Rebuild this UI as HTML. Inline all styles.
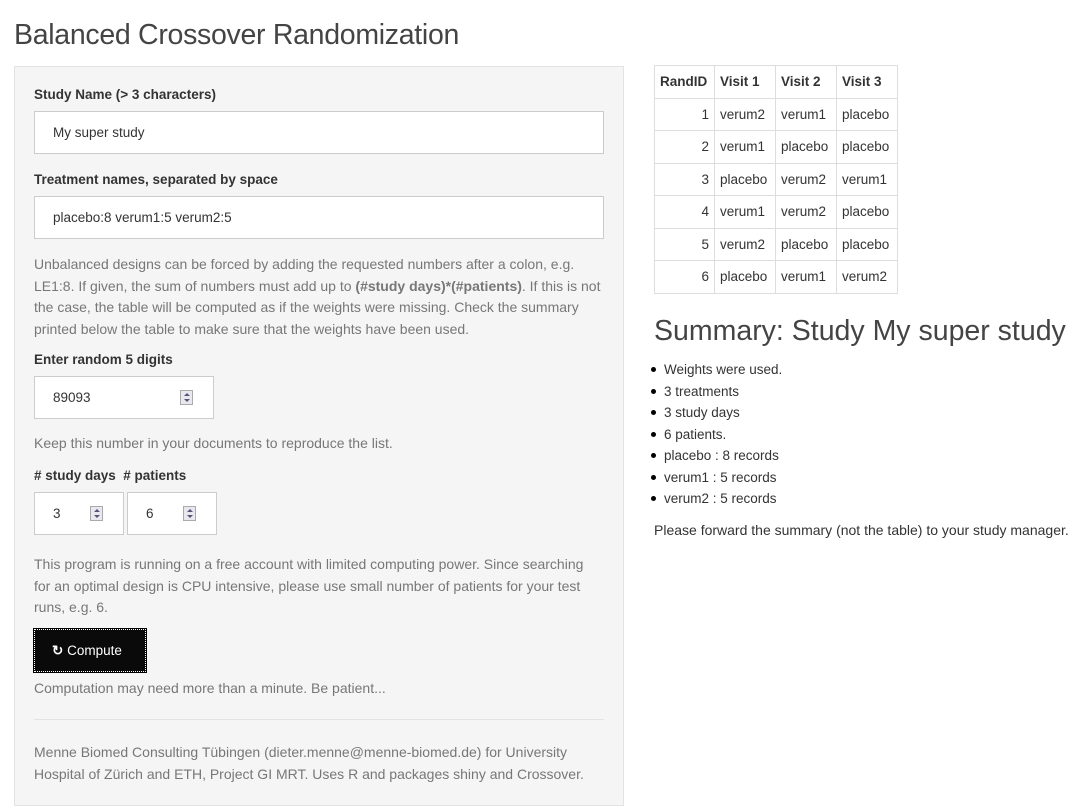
<!DOCTYPE html>
<html><head><meta charset="utf-8"><style>
*{margin:0;padding:0;box-sizing:border-box}
body{width:1086px;height:787px;overflow:hidden;background:#fff;font-family:"Liberation Sans",sans-serif;color:#333;font-size:13.5px;position:relative}
.a{position:absolute;white-space:nowrap}
h1{position:absolute;left:14px;top:19px;font-weight:normal;font-size:28.5px;color:#444;font-family:"Liberation Sans",sans-serif;letter-spacing:-0.3px}
.panel{position:absolute;left:14px;top:66px;width:610px;height:740px;background:#f5f5f5;border:1px solid #e3e3e3}
.lbl{font-weight:bold;font-size:13.5px;color:#333}
.inp{position:absolute;background:#fff;border:1px solid #ccc;height:43px;font-size:13.5px;padding:13px 0 0 18px;color:#333}
.help{color:#777;font-size:14px;line-height:21.5px}
.spin{position:absolute;top:13px;width:13px;height:15px;border:1px solid #aaa;background:#e8e8ee}
.spin:before{content:"";position:absolute;left:3px;top:2px;border:3px solid transparent;border-bottom:3px solid #557;border-top:0}
.spin:after{content:"";position:absolute;left:3px;top:8px;border:3px solid transparent;border-top:3px solid #557;border-bottom:0}
table{position:absolute;left:654px;top:65px;border-collapse:collapse;font-size:13.5px}
td,th{border:1px solid #ddd;height:32.5px;padding:0 5px;text-align:left}
th{font-weight:bold}
td.n{text-align:right}
ul{position:absolute;left:664px;top:359px;list-style:none;font-size:13.5px;line-height:21.5px}
ul li:before{content:"";position:absolute;left:-13px;margin-top:8px;width:5px;height:5px;border-radius:50%;background:#000}
</style></head><body>
<h1>Balanced Crossover Randomization</h1>
<div class="panel"></div>
<div class="a lbl" style="left:34px;top:87px">Study Name (&gt; 3 characters)</div>
<div class="inp" style="left:34px;top:111px;width:570px">My super study</div>
<div class="a lbl" style="left:34px;top:172px">Treatment names, separated by space</div>
<div class="inp" style="left:34px;top:196px;width:570px">placebo:8 verum1:5 verum2:5</div>
<div class="a help" style="left:34px;top:254px">Unbalanced designs can be forced by adding the requested numbers after a colon, e.g.<br>LE1:8. If given, the sum of numbers must add up to <b>(#study days)*(#patients)</b>. If this is not<br>the case, the table will be computed as if the weights were missing. Check the summary<br>printed below the table to make sure that the weights have been used.</div>
<div class="a lbl" style="left:34px;top:352px">Enter random 5 digits</div>
<div class="inp" style="left:34px;top:376px;width:180px">89093<span class="spin" style="left:145px"></span></div>
<div class="a help" style="left:34px;top:433px">Keep this number in your documents to reproduce the list.</div>
<div class="a lbl" style="left:34px;top:468px"># study days &nbsp;# patients</div>
<div class="inp" style="left:34px;top:492px;width:90px">3<span class="spin" style="left:55px"></span></div>
<div class="inp" style="left:127px;top:492px;width:90px">6<span class="spin" style="left:55px"></span></div>
<div class="a help" style="left:34px;top:554px">This program is running on a free account with limited computing power. Since searching<br>for an optimal design is CPU intensive, please use small number of patients for your test<br>runs, e.g. 6.</div>
<div class="a" style="left:34px;top:629px;width:112px;height:43px;background:#0a0a0a;border:1px dotted #fff;outline:1px solid #000;color:#fff;font-size:13.5px;padding-top:13px;padding-left:17px"><b>&#x21bb;</b> Compute</div>
<div class="a help" style="left:34px;top:678px">Computation may need more than a minute. Be patient...</div>
<div class="a" style="left:34px;top:719px;width:570px;border-top:1px solid #e3e3e3"></div>
<div class="a help" style="left:34px;top:742px">Menne Biomed Consulting Tübingen (dieter.menne@menne-biomed.de) for University<br>Hospital of Zürich and ETH, Project GI MRT. Uses R and packages shiny and Crossover.</div>
<table>
<tr><th style="width:60px">RandID</th><th style="width:61px">Visit 1</th><th style="width:61px">Visit 2</th><th style="width:61px">Visit 3</th></tr>
<tr><td class="n">1</td><td>verum2</td><td>verum1</td><td>placebo</td></tr>
<tr><td class="n">2</td><td>verum1</td><td>placebo</td><td>placebo</td></tr>
<tr><td class="n">3</td><td>placebo</td><td>verum2</td><td>verum1</td></tr>
<tr><td class="n">4</td><td>verum1</td><td>verum2</td><td>placebo</td></tr>
<tr><td class="n">5</td><td>verum2</td><td>placebo</td><td>placebo</td></tr>
<tr><td class="n">6</td><td>placebo</td><td>verum1</td><td>verum2</td></tr>
</table>
<div class="a" style="left:654px;top:315px;font-size:28.5px;color:#444">Summary: Study My super study</div>
<ul>
<li>Weights were used.</li><li>3 treatments</li><li>3 study days</li><li>6 patients.</li><li>placebo : 8 records</li><li>verum1 : 5 records</li><li>verum2 : 5 records</li>
</ul>
<div class="a" style="left:654px;top:522px;font-size:14px">Please forward the summary (not the table) to your study manager.</div>
</body></html>
